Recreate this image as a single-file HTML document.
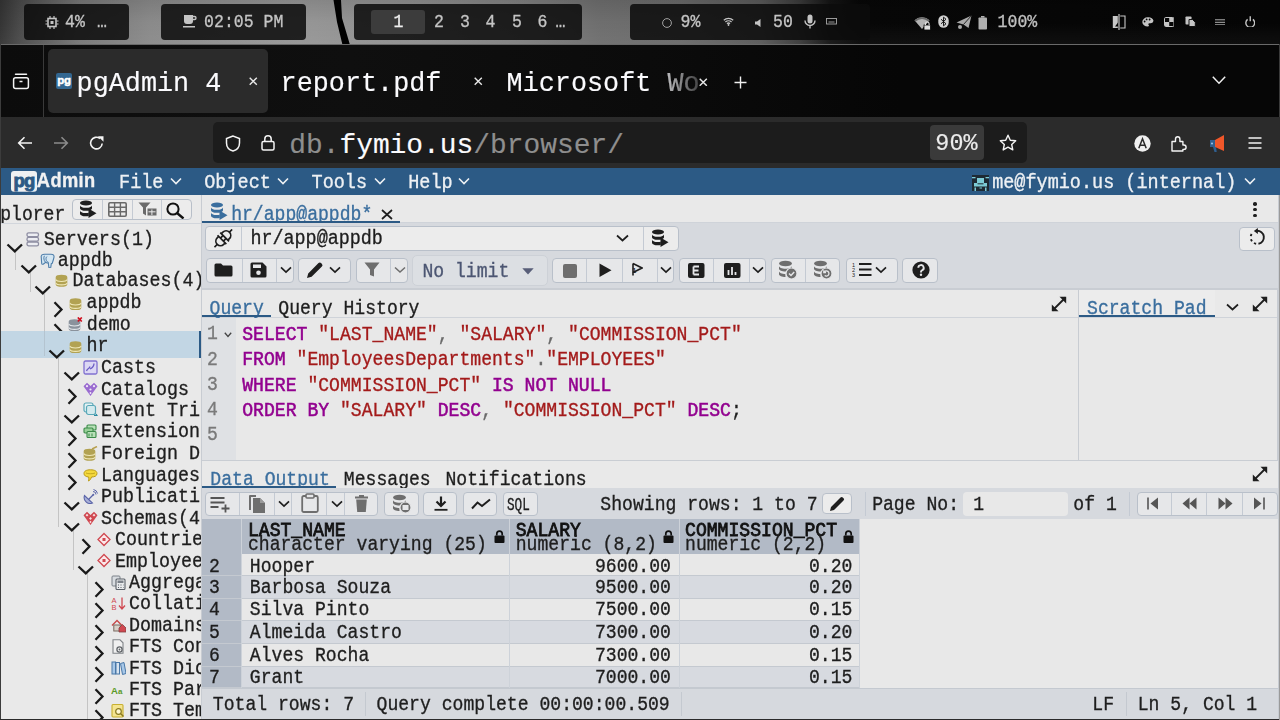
<!DOCTYPE html>
<html><head><meta charset="utf-8">
<style>
*{box-sizing:border-box;margin:0;padding:0}
html,body{width:1280px;height:720px;overflow:hidden;background:#000}
body{position:relative;font-family:"Liberation Mono",monospace;}
.a{position:absolute;display:block}
.t{position:absolute;line-height:0;white-space:pre;transform:scaleY(1.07);transform-origin:0 0;-webkit-text-stroke:0.3px currentColor}
</style></head><body>

<div class="a" style="left:0px;top:0px;width:1280px;height:45px;background:linear-gradient(90deg,#343434 0px,#4a4a4a 20px,#777 80px,#8a8a8a 150px,#969696 300px,#8e8e8e 420px,#808080 520px,#6e6e6e 600px,#6a6a6a 680px,#5a5a5a 760px,#3a3a3a 800px,#141414 830px,#070707 860px,#050505 1280px);"></div>
<div class="a" style="left:0px;top:0px;width:1280px;height:45px;background:linear-gradient(180deg,rgba(0,0,0,0.10),rgba(0,0,0,0) 50%,rgba(255,255,255,0.04));"></div>
<svg class="a" style="left:325px;top:0px;" width="30" height="45" viewBox="0 0 30 45"><path d="M8.5 0 L16 0 L17 18 L25 45 L17.5 45 L12 22 Z" fill="#000"/></svg>
<div class="a" style="left:24px;top:4px;width:105px;height:36px;background:rgba(12,12,12,0.86);border-radius:4px"></div>
<div class="a" style="left:161px;top:4px;width:145px;height:36px;background:rgba(12,12,12,0.86);border-radius:4px"></div>
<div class="a" style="left:354px;top:4px;width:228px;height:36px;background:rgba(12,12,12,0.86);border-radius:4px"></div>
<div class="a" style="left:630px;top:4px;width:240px;height:36px;background:rgba(12,12,12,0.86);border-radius:4px"></div>
<svg class="a" style="left:45px;top:16px;" width="14" height="13" viewBox="0 0 14 13"><rect x="3" y="2.5" width="8" height="8" fill="none" stroke="#c4c4c4" stroke-width="1.6"/><rect x="5.5" y="5" width="3" height="3" fill="#c4c4c4"/><path d="M5 0v2M9 0v2M5 11v2M9 11v2M0.5 5h2M0.5 8h2M11.5 5h2M11.5 8h2" stroke="#c4c4c4" stroke-width="1.2"/></svg>
<div class="t" style="left:65.09px;top:23.30px;font-size:16.5px;color:#c4c4c4;font-weight:normal;font-family:'Liberation Mono';">4%</div>
<div class="t" style="left:97.09px;top:23.30px;font-size:16.5px;color:#c4c4c4;font-weight:normal;font-family:'Liberation Mono';">…</div>
<svg class="a" style="left:183px;top:14px;" width="14" height="14" viewBox="0 0 14 14"><path d="M1 1h9v6a3 3 0 0 1-3 3H4a3 3 0 0 1-3-3z" fill="#c4c4c4"/><path d="M10 2.5h1.5a1.5 1.5 0 0 1 0 3H10" fill="none" stroke="#c4c4c4" stroke-width="1.4"/><rect x="0" y="12" width="12" height="1.5" fill="#c4c4c4"/></svg>
<div class="t" style="left:204.09px;top:23.30px;font-size:16.5px;color:#c4c4c4;font-weight:normal;font-family:'Liberation Mono';">02:05 PM</div>
<div class="a" style="left:371px;top:10px;width:54px;height:24px;background:#3c3c3c;border-radius:3px"></div>
<div class="t" style="left:393.59px;top:23.30px;font-size:16.5px;color:#f0f0f0;font-weight:normal;font-family:'Liberation Mono';">1</div>
<div class="t" style="left:434.09px;top:23.30px;font-size:16.5px;color:#c4c4c4;font-weight:normal;font-family:'Liberation Mono';">2</div>
<div class="t" style="left:460.09px;top:23.30px;font-size:16.5px;color:#c4c4c4;font-weight:normal;font-family:'Liberation Mono';">3</div>
<div class="t" style="left:485.59px;top:23.30px;font-size:16.5px;color:#c4c4c4;font-weight:normal;font-family:'Liberation Mono';">4</div>
<div class="t" style="left:512.09px;top:23.30px;font-size:16.5px;color:#c4c4c4;font-weight:normal;font-family:'Liberation Mono';">5</div>
<div class="t" style="left:537.59px;top:23.30px;font-size:16.5px;color:#c4c4c4;font-weight:normal;font-family:'Liberation Mono';">6</div>
<div class="t" style="left:555.59px;top:23.30px;font-size:16.5px;color:#c4c4c4;font-weight:normal;font-family:'Liberation Mono';">…</div>
<svg class="a" style="left:661px;top:17px;" width="12" height="12" viewBox="0 0 12 12"><circle cx="6" cy="6" r="4.4" fill="none" stroke="#b0b0b0" stroke-width="0.9"/></svg>
<div class="t" style="left:680.59px;top:23.30px;font-size:16.5px;color:#c4c4c4;font-weight:normal;font-family:'Liberation Mono';">9%</div>
<svg class="a" style="left:723px;top:16px;" width="11" height="10" viewBox="0 0 11 10"><path d="M0.8 4.2a7 7 0 0 1 9.4 0M2.4 6a4.5 4.5 0 0 1 6.2 0M4 7.7a2.2 2.2 0 0 1 3 0" fill="none" stroke="#c4c4c4" stroke-width="1.2"/><circle cx="5.5" cy="9" r="0.9" fill="#c4c4c4"/></svg>
<svg class="a" style="left:755px;top:19px;" width="8" height="8" viewBox="0 0 8 8"><path d="M0 2.6h2L5.5 0v8L2 5.4H0z" fill="#c4c4c4"/></svg>
<div class="t" style="left:773.09px;top:23.30px;font-size:16.5px;color:#c4c4c4;font-weight:normal;font-family:'Liberation Mono';">50</div>
<svg class="a" style="left:804px;top:14px;" width="12" height="15" viewBox="0 0 12 15"><rect x="3.5" y="0.5" width="5" height="9" rx="2.5" fill="#c4c4c4"/><path d="M1 6.5a5 5 0 0 0 10 0M6 11.5v3" fill="none" stroke="#c4c4c4" stroke-width="1.4"/></svg>
<svg class="a" style="left:825.5px;top:18px;" width="11" height="6.5" viewBox="0 0 11 6.5"><rect x="0.5" y="0.5" width="10" height="5.5" fill="none" stroke="#a8a8a8" stroke-width="0.9"/><path d="M2.5 4h6" stroke="#a8a8a8" stroke-width="0.9"/></svg>
<svg class="a" style="left:914px;top:16px;" width="17" height="14" viewBox="0 0 17 14"><path d="M0.5 4.2A11 11 0 0 1 15.5 4.2L8 13z" fill="#b4b4b4"/><path d="M0.5 4.2A11 11 0 0 1 15.5 4.2L14.3 5.6A9 9 0 0 0 1.7 5.6z" fill="#6a6a6a"/><rect x="10" y="9" width="6.5" height="5" fill="#e0e0e0" stroke="#060606" stroke-width="0.8"/><path d="M11.5 9V7.8a1.8 1.8 0 0 1 3.6 0V9" fill="none" stroke="#e0e0e0" stroke-width="1.1"/></svg>
<svg class="a" style="left:937.5px;top:14.5px;" width="11" height="13" viewBox="0 0 11 13"><rect x="0.3" y="0.3" width="10.4" height="12.4" rx="5.2" fill="#d0d0d0"/><path d="M3 4.2l5 4.6-2.5 2V2.2l2.5 2-5 4.6" fill="none" stroke="#060606" stroke-width="0.9"/></svg>
<svg class="a" style="left:955.5px;top:14.5px;" width="16" height="15" viewBox="0 0 16 15"><path d="M0.5 7.5L15.5 0.5L12.5 13L7.5 9.5z" fill="#a8a8a8"/><path d="M7.5 9.5L15.5 0.5" stroke="#060606" stroke-width="0.8"/><circle cx="4" cy="12" r="2" fill="#a8a8a8"/></svg>
<svg class="a" style="left:978px;top:15.5px;" width="9.5" height="14" viewBox="0 0 9.5 14"><rect x="3" y="0" width="3.5" height="1.6" fill="#b0b0b0"/><rect x="0.5" y="1.5" width="8.5" height="12" rx="0.8" fill="#b0b0b0"/></svg>
<div class="t" style="left:997.59px;top:23.30px;font-size:16.5px;color:#c0c0c0;font-weight:normal;font-family:'Liberation Mono';">100%</div>
<svg class="a" style="left:1112px;top:13.5px;" width="14" height="16" viewBox="0 0 14 16"><path d="M0.8 2h5v12h-5z" fill="#c8c8c8"/><path d="M8.2 2h4.8v12H8.2" fill="none" stroke="#c8c8c8" stroke-width="1.1"/><path d="M7 0v16" stroke="#c8c8c8" stroke-width="1.2"/><path d="M3 12.5l3-4v4z" fill="#060606"/></svg>
<svg class="a" style="left:1142px;top:17px;" width="11.5" height="9.5" viewBox="0 0 11.5 9.5"><path d="M5.8 0.3a5.5 4.6 0 0 0 0 9.2c1.4 0 1.4-1.1.7-1.7-.5-.7 0-1.6.9-1.6h1.5a2.6 2.6 0 0 0 2.6-2.4A5.5 4.4 0 0 0 5.8.3z" fill="#c4c4c4"/><circle cx="2.6" cy="4.5" r="0.9" fill="#060606"/><circle cx="4.6" cy="2.4" r="0.9" fill="#060606"/><circle cx="7.6" cy="2.5" r="0.9" fill="#060606"/></svg>
<svg class="a" style="left:1163.5px;top:16.5px;" width="10.5" height="10" viewBox="0 0 10.5 10"><rect x="0.5" y="0.5" width="9.5" height="9" rx="1.2" fill="none" stroke="#c4c4c4" stroke-width="1"/><rect x="5.2" y="1" width="4.3" height="4" fill="#c4c4c4"/><rect x="1" y="5" width="4.2" height="4" fill="#c4c4c4"/></svg>
<svg class="a" style="left:1184.5px;top:15.5px;" width="11" height="11" viewBox="0 0 11 11"><rect x="0.5" y="0.5" width="6" height="8" rx="0.8" fill="#c4c4c4"/><path d="M4 3.5h3.5l2.8 2.8v4.2H4z" fill="#c4c4c4" stroke="#060606" stroke-width="0.9"/></svg>
<svg class="a" style="left:1214.5px;top:18.5px;" width="10.5" height="6.5" viewBox="0 0 10.5 6.5"><path d="M0 0.8h10.5M0 3.3h10.5M0 5.8h10.5" stroke="#b0b0b0" stroke-width="1"/></svg>
<svg class="a" style="left:1244.5px;top:15.5px;" width="10.5" height="11.5" viewBox="0 0 10.5 11.5"><path d="M2.6 3.4a4.4 4.4 0 1 0 5.3 0" fill="none" stroke="#c4c4c4" stroke-width="1.4"/><path d="M5.25 0.3v5" stroke="#c4c4c4" stroke-width="1.4"/></svg>
<div class="a" style="left:0px;top:44px;width:1280px;height:1px;background:#6a6a6a;"></div>
<div class="a" style="left:0px;top:45px;width:1280px;height:72px;background:linear-gradient(90deg,#0c0c0c 0px,#0f0f0f 350px,#0b0b0b 650px,#060606 900px,#060606 1280px);"></div>
<div class="a" style="left:1279px;top:44px;width:1px;height:124px;background:#3a3a3a;"></div>
<div class="a" style="left:0px;top:44px;width:1px;height:676px;background:#3c3c3c;"></div>
<div class="a" style="left:43px;top:45px;width:1px;height:72px;background:#3a3a3a;"></div>
<svg class="a" style="left:12px;top:72px;" width="18" height="18" viewBox="0 0 18 18"><path d="M3.5 2.2h11" stroke="#f4f4f4" stroke-width="1.5" stroke-linecap="round"/><rect x="1.6" y="5.8" width="14.8" height="10.6" rx="2" fill="none" stroke="#f4f4f4" stroke-width="1.5"/><path d="M7.5 9.5h3" stroke="#f4f4f4" stroke-width="1.5"/></svg>
<div class="a" style="left:48px;top:49px;width:220px;height:64px;background:#2b2b2b;border-radius:5px"></div>
<svg class="a" style="left:56px;top:73px;" width="16" height="16" viewBox="0 0 16 16"><rect width="16" height="16" rx="2" fill="#336791"/><text x="8" y="11.2" font-family="Liberation Sans" font-weight="bold" font-size="11.5" fill="#fff" stroke="#fff" stroke-width="0.5" text-anchor="middle" letter-spacing="-0.3">pg</text></svg>
<div class="t" style="left:76.62px;top:83.81px;font-size:26.8px;color:#fbfbfe;font-weight:normal;font-family:'Liberation Mono';transform:scaleY(1.05);-webkit-text-stroke:0.15px currentColor;">pgAdmin 4</div>
<svg class="a" style="left:249px;top:77px;" width="8.5" height="8.5" viewBox="0 0 8.5 8.5"><path d="M0.7 0.7L7.8 7.8M7.8 0.7L0.7 7.8" stroke="#e8e8e8" stroke-width="1.4"/></svg>
<div class="t" style="left:280.62px;top:83.81px;font-size:26.8px;color:#fbfbfe;font-weight:normal;font-family:'Liberation Mono';transform:scaleY(1.05);-webkit-text-stroke:0.15px currentColor;">report.pdf</div>
<svg class="a" style="left:474px;top:77px;" width="8.5" height="8.5" viewBox="0 0 8.5 8.5"><path d="M0.7 0.7L7.8 7.8M7.8 0.7L0.7 7.8" stroke="#e8e8e8" stroke-width="1.4"/></svg>
<div class="a" style="left:500px;top:55px;width:198px;height:50px;overflow:hidden;-webkit-mask-image:linear-gradient(90deg,#000 0,#000 150px,rgba(0,0,0,0.25) 198px)">
<div class="t" style="left:6.62px;top:28.81px;font-size:26.8px;color:#fbfbfe;font-weight:normal;font-family:'Liberation Mono';transform:scaleY(1.05);-webkit-text-stroke:0.15px currentColor;">Microsoft Wo</div>
</div>
<svg class="a" style="left:699px;top:77.5px;" width="8.5" height="8.5" viewBox="0 0 8.5 8.5"><path d="M0.7 0.7L7.8 7.8M7.8 0.7L0.7 7.8" stroke="#e8e8e8" stroke-width="1.4"/></svg>
<svg class="a" style="left:734px;top:76px;" width="13" height="13" viewBox="0 0 13 13"><path d="M6.5 0.5v12M0.5 6.5h12" stroke="#f0f0f0" stroke-width="1.4"/></svg>
<svg class="a" style="left:1212px;top:76px;" width="14" height="9" viewBox="0 0 14 9"><path d="M0.8 0.8L7 7.2L13.2 0.8" fill="none" stroke="#f0f0f0" stroke-width="1.5"/></svg>
<div class="a" style="left:1px;top:117px;width:1279px;height:51px;background:#2b2b2b;"></div>
<svg class="a" style="left:17px;top:136px;" width="16" height="14" viewBox="0 0 16 14"><path d="M15 7H2M7.5 1.2L1.7 7l5.8 5.8" fill="none" stroke="#f4f4f4" stroke-width="1.6"/></svg>
<svg class="a" style="left:53px;top:136px;" width="16" height="14" viewBox="0 0 16 14"><path d="M1 7h13M8.5 1.2L14.3 7l-5.8 5.8" fill="none" stroke="#8c8c8c" stroke-width="1.6"/></svg>
<svg class="a" style="left:89px;top:135px;" width="16" height="16" viewBox="0 0 16 16"><path d="M13.2 8.5A5.8 5.8 0 1 1 11 3.5" fill="none" stroke="#f4f4f4" stroke-width="1.6"/><path d="M9 1.2h5.5v5.5z" fill="#f4f4f4"/></svg>
<div class="a" style="left:213px;top:122px;width:814px;height:41px;background:#1c1c1c;border-radius:5px"></div>
<svg class="a" style="left:225px;top:135px;" width="16" height="17" viewBox="0 0 16 17"><path d="M8 1L1.5 3.5v4.5c0 4 3 7 6.5 8 3.5-1 6.5-4 6.5-8V3.5z" fill="none" stroke="#f4f4f4" stroke-width="1.5"/></svg>
<svg class="a" style="left:261px;top:134px;" width="14" height="17" viewBox="0 0 14 17"><rect x="1" y="7.5" width="12" height="8.5" rx="1.5" fill="none" stroke="#f4f4f4" stroke-width="1.5"/><path d="M3.8 7.5V5a3.2 3.2 0 0 1 6.4 0v2.5" fill="none" stroke="#f4f4f4" stroke-width="1.5"/></svg>
<div class="t" style="left:289.2px;top:145.6px;font-size:27.9px;color:#8e8e8e;transform:none;-webkit-text-stroke:0.15px currentColor">db.<span style="color:#fbfbfe">fymio.us</span>/browser/</div>
<div class="a" style="left:930px;top:125px;width:54px;height:35px;background:#3a3a3a;border-radius:4px"></div>
<div class="t" style="left:935.36px;top:144.46px;font-size:23.4px;color:#ececec;font-weight:normal;font-family:'Liberation Mono';transform:scaleY(1.05);-webkit-text-stroke:0.15px currentColor;">90%</div>
<svg class="a" style="left:999px;top:134px;" width="18" height="18" viewBox="0 0 18 18"><path d="M9 1.2l2.3 5 5.4.6-4 3.7 1.1 5.4L9 13.2l-4.8 2.7 1.1-5.4-4-3.7 5.4-.6z" fill="none" stroke="#f4f4f4" stroke-width="1.4" stroke-linejoin="round"/></svg>
<svg class="a" style="left:1134px;top:135px;" width="17" height="17" viewBox="0 0 17 17"><circle cx="8.5" cy="8.5" r="8.2" fill="#f0f0f0"/><path d="M4.8 13.3L8.5 3.8l3.7 9.5M6 10.2h5" fill="none" stroke="#2b2b2b" stroke-width="1.5"/></svg>
<svg class="a" style="left:1171px;top:135px;" width="16" height="17" viewBox="0 0 16 17"><path d="M1 16V6.5h3.5V4a2.2 2.2 0 0 1 4.4 0v2.5h3V10h1a2.2 2.2 0 0 1 0 4.4h-1V16z" fill="none" stroke="#f4f4f4" stroke-width="1.4" stroke-linejoin="round"/></svg>
<svg class="a" style="left:1208px;top:134px;" width="17" height="19" viewBox="0 0 17 19"><path d="M16 1v16L7 13H4V6h3z" fill="#f0572a"/><path d="M2 6h5v7H2z" fill="#2f5f8f"/><path d="M5 13l1.5 5h2.2L8 13z" fill="#2f5f8f"/><circle cx="4" cy="9.5" r="1" fill="#9ec4e8"/></svg>
<svg class="a" style="left:1248px;top:137px;" width="14" height="12" viewBox="0 0 14 12"><path d="M0.5 1h13M0.5 6h13M0.5 11h13" stroke="#f4f4f4" stroke-width="1.5"/></svg>
<div class="a" style="left:1px;top:168px;width:1279px;height:27px;background:#2c5a85;"></div>
<svg class="a" style="left:11px;top:171px;" width="26" height="21" viewBox="0 0 26 21"><rect x="0" y="0" width="26" height="20.8" rx="3" fill="#eef0f2"/><text x="2.6" y="16.3" font-family="Liberation Sans" font-weight="bold" font-size="18.5" fill="#2c5a85" stroke="#2c5a85" stroke-width="0.9" letter-spacing="-0.8">pg</text></svg>
<div class="t" style="left:36.84px;top:180.62px;font-size:18.3px;color:#f2f2f2;font-weight:bold;font-family:'Liberation Sans';letter-spacing:0.35px;">Admin</div>
<div class="t" style="left:119.04px;top:183.53px;font-size:18.5px;color:#eef1f4;font-weight:normal;font-family:'Liberation Mono';">File</div>
<svg class="a" style="left:169.8px;top:177px;" width="12" height="8" viewBox="0 0 12 8"><path d="M1 1.5L6.0 6.5L11 1.5" fill="none" stroke="#eef1f4" stroke-width="1.6"/></svg>
<div class="t" style="left:204.24px;top:183.53px;font-size:18.5px;color:#eef1f4;font-weight:normal;font-family:'Liberation Mono';">Object</div>
<svg class="a" style="left:277px;top:177px;" width="12" height="8" viewBox="0 0 12 8"><path d="M1 1.5L6.0 6.5L11 1.5" fill="none" stroke="#eef1f4" stroke-width="1.6"/></svg>
<div class="t" style="left:311.54px;top:183.53px;font-size:18.5px;color:#eef1f4;font-weight:normal;font-family:'Liberation Mono';">Tools</div>
<svg class="a" style="left:373.5px;top:177px;" width="12" height="8" viewBox="0 0 12 8"><path d="M1 1.5L6.0 6.5L11 1.5" fill="none" stroke="#eef1f4" stroke-width="1.6"/></svg>
<div class="t" style="left:408.24px;top:183.53px;font-size:18.5px;color:#eef1f4;font-weight:normal;font-family:'Liberation Mono';">Help</div>
<svg class="a" style="left:458.2px;top:177px;" width="12" height="8" viewBox="0 0 12 8"><path d="M1 1.5L6.0 6.5L11 1.5" fill="none" stroke="#eef1f4" stroke-width="1.6"/></svg>
<svg class="a" style="left:972px;top:175px;" width="17" height="16" viewBox="0 0 17 16"><rect width="17" height="16" fill="#1e2a34"/><g fill="#7ccbd6"><rect x="0" y="2" width="3.5" height="1.3"/><rect x="13.5" y="2" width="3.5" height="1.3"/><rect x="5" y="3" width="7" height="5.5"/><rect x="2" y="8" width="13" height="3.5"/><rect x="2.5" y="12.5" width="1.5" height="3.5"/><rect x="13" y="12.5" width="1.5" height="3.5"/><rect x="7.5" y="12.5" width="2.5" height="1"/></g><rect x="5.5" y="8.3" width="6" height="1" fill="#1e2a34"/></svg>
<div class="t" style="left:992.14px;top:183.53px;font-size:18.5px;color:#eef1f4;font-weight:normal;font-family:'Liberation Mono';">me@fymio.us (internal)</div>
<svg class="a" style="left:1244px;top:177px;" width="12" height="8" viewBox="0 0 12 8"><path d="M1 1.5L6.0 6.5L11 1.5" fill="none" stroke="#eef1f4" stroke-width="1.6"/></svg>
<div class="a" style="left:1px;top:195px;width:200px;height:525px;background:#e9e9e9;"></div>
<div class="a" style="left:201px;top:195px;width:1px;height:525px;background:#c8ccd2;"></div>
<div class="a" style="left:1px;top:223px;width:200px;height:1px;background:#d2d6dc;"></div>
<div class="a" style="left:1px;top:195px;width:200px;height:28px;overflow:hidden">
<div class="t" style="left:-98.55px;top:19.65px;font-size:18.1px;color:#1e1e1e;font-weight:normal;font-family:'Liberation Mono';">Object Explorer</div>
</div>
<div class="a" style="left:72px;top:199px;width:120px;height:21px;background:#ececec;border:1px solid #b8bfc9;border-radius:4px"></div>
<div class="a" style="left:102px;top:200px;width:1px;height:19px;background:#c4cad3;"></div>
<div class="a" style="left:132px;top:200px;width:1px;height:19px;background:#c4cad3;"></div>
<div class="a" style="left:161px;top:200px;width:1px;height:19px;background:#c4cad3;"></div>
<svg class="a" style="left:79px;top:200px;" width="18" height="18" viewBox="0 0 18 18"><ellipse cx="7" cy="3" rx="6" ry="2.6" fill="#1e1e1e"/><path d="M1 5.2c0 1.5 2.7 2.6 6 2.6s6-1.1 6-2.6v3c0 1.5-2.7 2.6-6 2.6s-6-1.1-6-2.6z" fill="#1e1e1e"/><path d="M1 10.4c0 1.5 2.7 2.6 6 2.6 1 0 2-.1 2.8-.3V16c-.8.2-1.8.3-2.8.3-3.3 0-6-1.1-6-2.6z" fill="#1e1e1e"/><path d="M9.5 8.5L17.5 13.3 9.5 18z" fill="#1e1e1e"/></svg>
<svg class="a" style="left:108px;top:202px;" width="19" height="15" viewBox="0 0 19 15"><rect x="0.8" y="0.8" width="17.4" height="13.4" rx="1.2" fill="none" stroke="#6a6a6a" stroke-width="1.6"/><path d="M0.8 5.3h17.4M0.8 9.7h17.4M6.6 0.8v13.4M12.4 0.8v13.4" stroke="#6a6a6a" stroke-width="1.4"/></svg>
<svg class="a" style="left:138px;top:202px;" width="19" height="14" viewBox="0 0 19 14"><path d="M0.5 0.5h12l-4.5 5v8l-3-2v-6z" fill="#6a6a6a"/><rect x="9.5" y="6.5" width="9" height="7" fill="#6a6a6a"/><path d="M10.5 9.8h7M13.9 7.5v5.5" stroke="#ececec" stroke-width="1"/></svg>
<svg class="a" style="left:166px;top:202px;" width="20" height="17" viewBox="0 0 20 17"><circle cx="7" cy="7" r="5.6" fill="none" stroke="#111" stroke-width="2"/><path d="M11 11l6.5 5.5" stroke="#111" stroke-width="2.4"/></svg>
<div class="a" style="left:1px;top:223px;width:200px;height:497px;overflow:hidden">
<div class="a" style="left:14px;top:28px;width:1px;height:19px;background:#c4c4c4;"></div>
<div class="a" style="left:29px;top:49px;width:1px;height:20px;background:#c4c4c4;"></div>
<div class="a" style="left:43px;top:71px;width:1px;height:62px;background:#c4c4c4;"></div>
<div class="a" style="left:57px;top:135px;width:1px;height:169px;background:#c4c4c4;"></div>
<div class="a" style="left:72px;top:304px;width:1px;height:43px;background:#c4c4c4;"></div>
<div class="a" style="left:86px;top:347px;width:1px;height:150px;background:#c4c4c4;"></div>
<div class="t" style="left:42.84px;top:18.08px;font-size:18.35px;color:#1e1e1e;font-weight:normal;font-family:'Liberation Mono';">Servers(1)</div>
<div class="t" style="left:56.74px;top:38.88px;font-size:18.35px;color:#1e1e1e;font-weight:normal;font-family:'Liberation Mono';">appdb</div>
<div class="t" style="left:71.54px;top:59.38px;font-size:18.35px;color:#1e1e1e;font-weight:normal;font-family:'Liberation Mono';">Databases(4)</div>
<div class="t" style="left:85.54px;top:81.48px;font-size:18.35px;color:#1e1e1e;font-weight:normal;font-family:'Liberation Mono';">appdb</div>
<div class="t" style="left:85.84px;top:102.88px;font-size:18.35px;color:#1e1e1e;font-weight:normal;font-family:'Liberation Mono';">demo</div>
<div class="t" style="left:85.54px;top:124.18px;font-size:18.35px;color:#1e1e1e;font-weight:normal;font-family:'Liberation Mono';">hr</div>
<div class="t" style="left:99.94px;top:145.78px;font-size:18.35px;color:#1e1e1e;font-weight:normal;font-family:'Liberation Mono';">Casts</div>
<div class="t" style="left:99.94px;top:167.88px;font-size:18.35px;color:#1e1e1e;font-weight:normal;font-family:'Liberation Mono';">Catalogs</div>
<div class="t" style="left:99.94px;top:188.58px;font-size:18.35px;color:#1e1e1e;font-weight:normal;font-family:'Liberation Mono';">Event Triggers</div>
<div class="t" style="left:99.94px;top:210.28px;font-size:18.35px;color:#1e1e1e;font-weight:normal;font-family:'Liberation Mono';">Extensions</div>
<div class="t" style="left:99.94px;top:231.88px;font-size:18.35px;color:#1e1e1e;font-weight:normal;font-family:'Liberation Mono';">Foreign Data Wrappers</div>
<div class="t" style="left:99.94px;top:254.08px;font-size:18.35px;color:#1e1e1e;font-weight:normal;font-family:'Liberation Mono';">Languages</div>
<div class="t" style="left:99.94px;top:275.48px;font-size:18.35px;color:#1e1e1e;font-weight:normal;font-family:'Liberation Mono';">Publications</div>
<div class="t" style="left:99.94px;top:296.88px;font-size:18.35px;color:#1e1e1e;font-weight:normal;font-family:'Liberation Mono';">Schemas(4)</div>
<div class="t" style="left:114.04px;top:318.28px;font-size:18.35px;color:#1e1e1e;font-weight:normal;font-family:'Liberation Mono';">Countries</div>
<div class="t" style="left:114.04px;top:339.68px;font-size:18.35px;color:#1e1e1e;font-weight:normal;font-family:'Liberation Mono';">Employees</div>
<div class="t" style="left:128.04px;top:361.08px;font-size:18.35px;color:#1e1e1e;font-weight:normal;font-family:'Liberation Mono';">Aggregates</div>
<div class="t" style="left:128.04px;top:382.48px;font-size:18.35px;color:#1e1e1e;font-weight:normal;font-family:'Liberation Mono';">Collations</div>
<div class="t" style="left:128.04px;top:403.88px;font-size:18.35px;color:#1e1e1e;font-weight:normal;font-family:'Liberation Mono';">Domains</div>
<div class="t" style="left:128.04px;top:425.28px;font-size:18.35px;color:#1e1e1e;font-weight:normal;font-family:'Liberation Mono';">FTS Configurations</div>
<div class="t" style="left:128.04px;top:446.68px;font-size:18.35px;color:#1e1e1e;font-weight:normal;font-family:'Liberation Mono';">FTS Dictionaries</div>
<div class="t" style="left:128.04px;top:468.08px;font-size:18.35px;color:#1e1e1e;font-weight:normal;font-family:'Liberation Mono';">FTS Parsers</div>
<div class="t" style="left:128.04px;top:489.48px;font-size:18.35px;color:#1e1e1e;font-weight:normal;font-family:'Liberation Mono';">FTS Templates</div>
<svg class="a" style="left:25px;top:8.800000000000011px;" width="15" height="15" viewBox="0 0 15 15"><g fill="#ecedf2" stroke="#8e8ea2" stroke-width="1.3"><rect x="1" y="0.8" width="11.5" height="3.8" rx="1.6"/><rect x="1" y="5.4" width="11.5" height="3.8" rx="1.6"/><rect x="1" y="10" width="11.5" height="3.8" rx="1.6"/></g></svg>
<svg class="a" style="left:4.6px;top:20.200000000000017px;" width="18" height="11" viewBox="0 0 18 11"><path d="M1.5 1.5L8.8 8.4L16 1.5" fill="none" stroke="#1a1a1a" stroke-width="2.3"/></svg>
<svg class="a" style="left:39px;top:29.600000000000023px;" width="15" height="15" viewBox="0 0 15 15"><path d="M1.2 3.8C1 2 2.4 1.2 4.5 1.2h6.5c2 0 3.3 1 3 3-.3 2-1.2 4.5-1.8 6.2l-.9.2-.5 3.6c-.2.9-1.8.9-2 0L8.3 9.8C7.3 10.2 6.2 9.8 5.7 9.2L3.2 11.2c-.8.3-1.4 0-1.5-.8z" fill="#d4e6f2" stroke="#4e7eaa" stroke-width="1.1"/><path d="M4.4 2.8c-1 1.6-.6 4.8.9 6.2M7.2 3.6c-1 .2-1.4 1.6-1.1 3.1s1.1 2.3 2 2" fill="none" stroke="#4e7eaa" stroke-width="1"/></svg>
<svg class="a" style="left:19px;top:41.0px;" width="18" height="11" viewBox="0 0 18 11"><path d="M1.5 1.5L8.8 8.4L16 1.5" fill="none" stroke="#1a1a1a" stroke-width="2.3"/></svg>
<svg class="a" style="left:54px;top:50.10000000000002px;" width="15" height="15" viewBox="0 0 15 15"><g transform="translate(0,1)"><path d="M0.7 3a5.8 2.3 0 0 1 11.6 0v7.5a5.8 2.3 0 0 1-11.6 0z" fill="#b2a252"/><path d="M0.8 5.6a5.8 2.3 0 0 0 11.4 0M0.8 9a5.8 2.3 0 0 0 11.4 0" fill="none" stroke="#f0e8b8" stroke-width="1.1"/></g></svg>
<svg class="a" style="left:33.3px;top:61.5px;" width="18" height="11" viewBox="0 0 18 11"><path d="M1.5 1.5L8.8 8.4L16 1.5" fill="none" stroke="#1a1a1a" stroke-width="2.3"/></svg>
<svg class="a" style="left:68px;top:72.19999999999999px;" width="15" height="15" viewBox="0 0 15 15"><g transform="translate(0,2.5)"><path d="M0.7 3a5.8 2.3 0 0 1 11.6 0v7.5a5.8 2.3 0 0 1-11.6 0z" fill="#b2a252"/><path d="M0.8 5.6a5.8 2.3 0 0 0 11.4 0M0.8 9a5.8 2.3 0 0 0 11.4 0" fill="none" stroke="#f0e8b8" stroke-width="1.1"/></g></svg>
<svg class="a" style="left:52.1px;top:78.19999999999999px;" width="11" height="17" viewBox="0 0 11 17"><path d="M1.5 1.2L8.5 8.5L1.5 15.8" fill="none" stroke="#1a1a1a" stroke-width="2.3"/></svg>
<svg class="a" style="left:67px;top:93.60000000000002px;" width="15" height="15" viewBox="0 0 15 15"><g transform="translate(0,1.5)"><path d="M0.7 3a5.8 2.3 0 0 1 11.6 0v7.5a5.8 2.3 0 0 1-11.6 0z" fill="#8a929c"/><path d="M0.8 5.6a5.8 2.3 0 0 0 11.4 0M0.8 9a5.8 2.3 0 0 0 11.4 0" fill="none" stroke="#e4e8ec" stroke-width="1.1"/></g><path d="M9.8 0.5l4 4M13.8 0.5l-4 4" stroke="#d01020" stroke-width="1.7"/></svg>
<svg class="a" style="left:52px;top:99.60000000000002px;" width="11" height="17" viewBox="0 0 11 17"><path d="M1.5 1.2L8.5 8.5L1.5 15.8" fill="none" stroke="#1a1a1a" stroke-width="2.3"/></svg>
<div class="a" style="left:0px;top:108px;width:200px;height:27px;background:#c2d6e4;"></div>
<div class="a" style="left:198px;top:108px;width:2px;height:27px;background:#2c5a85;"></div>
<div class="a" style="left:43px;top:108px;width:1px;height:25px;background:#b4c4d0;"></div>
<div class="t" style="left:85.54px;top:124.18px;font-size:18.35px;color:#1e1e1e;font-weight:normal;font-family:'Liberation Mono';">hr</div>
<svg class="a" style="left:68px;top:114.89999999999998px;" width="15" height="15" viewBox="0 0 15 15"><g transform="translate(0,2.5)"><path d="M0.7 3a5.8 2.3 0 0 1 11.6 0v7.5a5.8 2.3 0 0 1-11.6 0z" fill="#b2a252"/><path d="M0.8 5.6a5.8 2.3 0 0 0 11.4 0M0.8 9a5.8 2.3 0 0 0 11.4 0" fill="none" stroke="#f0e8b8" stroke-width="1.1"/></g></svg>
<svg class="a" style="left:47.2px;top:126.29999999999995px;" width="18" height="11" viewBox="0 0 18 11"><path d="M1.5 1.5L8.8 8.4L16 1.5" fill="none" stroke="#1a1a1a" stroke-width="2.3"/></svg>
<svg class="a" style="left:82px;top:136.5px;" width="15" height="15" viewBox="0 0 15 15"><rect x="1" y="1" width="13" height="13" rx="1.5" fill="#dcd8f4" stroke="#8070d0" stroke-width="1.3"/><path d="M3.5 11c1-3 3-2 3.5-4.5M7 9c2-1 4-2 4-5.5" fill="none" stroke="#6a5cc4" stroke-width="1.3"/></svg>
<svg class="a" style="left:62px;top:147.89999999999998px;" width="18" height="11" viewBox="0 0 18 11"><path d="M1.5 1.5L8.8 8.4L16 1.5" fill="none" stroke="#1a1a1a" stroke-width="2.3"/></svg>
<svg class="a" style="left:82px;top:158.60000000000002px;" width="15" height="15" viewBox="0 0 15 15"><path d="M7.5 4L11 0.8 14.5 4.3 7.5 14 0.5 4.3 4 0.8z" fill="#9a6cd0"/><g fill="#f0e8f8"><circle cx="4" cy="4.2" r="1.1"/><circle cx="11" cy="4.2" r="1.1"/><circle cx="7.5" cy="7.5" r="1.1"/><circle cx="7.5" cy="11" r="0.9"/></g></svg>
<svg class="a" style="left:66px;top:164.60000000000002px;" width="11" height="17" viewBox="0 0 11 17"><path d="M1.5 1.2L8.5 8.5L1.5 15.8" fill="none" stroke="#1a1a1a" stroke-width="2.3"/></svg>
<svg class="a" style="left:82px;top:179.3px;" width="15" height="15" viewBox="0 0 15 15"><rect x="1" y="1" width="9" height="9" rx="2" fill="#e4f2f4" stroke="#5aa8b8" stroke-width="1.2"/><rect x="3.5" y="3.5" width="9" height="9" rx="2" fill="#d4eaee" stroke="#5aa8b8" stroke-width="1.2"/><path d="M11 13.5h3l-1-1.5" fill="none" stroke="#2a88a0" stroke-width="1.2"/></svg>
<svg class="a" style="left:62px;top:190.7px;" width="18" height="11" viewBox="0 0 18 11"><path d="M1.5 1.5L8.8 8.4L16 1.5" fill="none" stroke="#1a1a1a" stroke-width="2.3"/></svg>
<svg class="a" style="left:82px;top:201px;" width="15" height="15" viewBox="0 0 15 15"><rect x="4" y="1" width="9" height="5" rx="1" fill="#b8e0b8" stroke="#3a8a48" stroke-width="1.1"/><rect x="1" y="4" width="9" height="5" rx="1" fill="#98d098" stroke="#3a8a48" stroke-width="1.1"/><rect x="4" y="7.5" width="9" height="6" rx="1" fill="#b8e0b8" stroke="#3a8a48" stroke-width="1.1"/><path d="M6 9.5v3M9 9.5v3" stroke="#3a8a48" stroke-width="1"/></svg>
<svg class="a" style="left:66px;top:207px;" width="11" height="17" viewBox="0 0 11 17"><path d="M1.5 1.2L8.5 8.5L1.5 15.8" fill="none" stroke="#1a1a1a" stroke-width="2.3"/></svg>
<svg class="a" style="left:82px;top:222.60000000000002px;" width="15" height="15" viewBox="0 0 15 15"><g transform="translate(0,2)"><path d="M0.7 3a5.8 2.3 0 0 1 11.6 0v7.5a5.8 2.3 0 0 1-11.6 0z" fill="#b2a252"/><path d="M0.8 5.6a5.8 2.3 0 0 0 11.4 0M0.8 9a5.8 2.3 0 0 0 11.4 0" fill="none" stroke="#f0e8b8" stroke-width="1.1"/></g><path d="M9 3l5-2.5" stroke="#b8a050" stroke-width="1.5"/></svg>
<svg class="a" style="left:66px;top:228.60000000000002px;" width="11" height="17" viewBox="0 0 11 17"><path d="M1.5 1.2L8.5 8.5L1.5 15.8" fill="none" stroke="#1a1a1a" stroke-width="2.3"/></svg>
<svg class="a" style="left:82px;top:244.8px;" width="15" height="15" viewBox="0 0 15 15"><path d="M1 5.5C1 3 3.5 1.8 7.5 1.8S14 3 14 5.5 11.5 9 8.5 9c-.5 1.5-1.5 3.5-3 4 .5-1.2.5-2.8.2-4C2.8 8.8 1 7.5 1 5.5z" fill="#f4d83c" stroke="#b89a18" stroke-width="1"/><path d="M3 5c1.5 1 7 1 9 0" fill="none" stroke="#b89a18" stroke-width="0.8"/></svg>
<svg class="a" style="left:66px;top:250.8px;" width="11" height="17" viewBox="0 0 11 17"><path d="M1.5 1.2L8.5 8.5L1.5 15.8" fill="none" stroke="#1a1a1a" stroke-width="2.3"/></svg>
<svg class="a" style="left:82px;top:266.2px;" width="15" height="15" viewBox="0 0 15 15"><path d="M1.5 6.5a6 6 0 0 0 8 7.5z" fill="#a8b0d8" stroke="#5a64a8" stroke-width="1.1"/><path d="M5.5 10.5l4.5-4.5" stroke="#5a64a8" stroke-width="1.2"/><circle cx="10.3" cy="5.7" r="1" fill="#5a64a8"/><path d="M10 2.5a3 3 0 0 1 3 3M10.5 0.5a5 5 0 0 1 4 4" fill="none" stroke="#5a64a8" stroke-width="1"/></svg>
<svg class="a" style="left:62px;top:277.59999999999997px;" width="18" height="11" viewBox="0 0 18 11"><path d="M1.5 1.5L8.8 8.4L16 1.5" fill="none" stroke="#1a1a1a" stroke-width="2.3"/></svg>
<svg class="a" style="left:82px;top:287.6px;" width="15" height="15" viewBox="0 0 15 15"><path d="M7.5 4L11 0.8 14.5 4.3 7.5 14 0.5 4.3 4 0.8z" fill="#d04850"/><g fill="#f8e0e2"><rect x="3" y="3.2" width="2" height="2" transform="rotate(45 4 4.2)"/><rect x="10" y="3.2" width="2" height="2" transform="rotate(45 11 4.2)"/><rect x="6.5" y="6.5" width="2" height="2" transform="rotate(45 7.5 7.5)"/><rect x="6.7" y="10.2" width="1.6" height="1.6" transform="rotate(45 7.5 11)"/></g></svg>
<svg class="a" style="left:62px;top:299.0px;" width="18" height="11" viewBox="0 0 18 11"><path d="M1.5 1.5L8.8 8.4L16 1.5" fill="none" stroke="#1a1a1a" stroke-width="2.3"/></svg>
<svg class="a" style="left:96px;top:309px;" width="15" height="15" viewBox="0 0 15 15"><path d="M7 1.5l6 6-6 6-6-6z" fill="#fbe8ea" stroke="#d04850" stroke-width="1.3"/><rect x="5.5" y="6" width="3" height="3" fill="#d04850"/></svg>
<svg class="a" style="left:79.7px;top:315px;" width="11" height="17" viewBox="0 0 11 17"><path d="M1.5 1.2L8.5 8.5L1.5 15.8" fill="none" stroke="#1a1a1a" stroke-width="2.3"/></svg>
<svg class="a" style="left:96px;top:330.4px;" width="15" height="15" viewBox="0 0 15 15"><path d="M7 1.5l6 6-6 6-6-6z" fill="#fbe8ea" stroke="#d04850" stroke-width="1.3"/><rect x="5.5" y="6" width="3" height="3" fill="#d04850"/></svg>
<svg class="a" style="left:75.8px;top:341.79999999999995px;" width="18" height="11" viewBox="0 0 18 11"><path d="M1.5 1.5L8.8 8.4L16 1.5" fill="none" stroke="#1a1a1a" stroke-width="2.3"/></svg>
<svg class="a" style="left:110px;top:351.79999999999995px;" width="15" height="15" viewBox="0 0 15 15"><rect x="1" y="1" width="8" height="10" rx="1" fill="#d8dce0" stroke="#7a8088" stroke-width="1"/><rect x="5" y="4" width="9" height="10.5" rx="1" fill="#e8eaec" stroke="#5a6068" stroke-width="1.1"/><rect x="6.5" y="5.5" width="6" height="2.5" fill="#7a8088"/><path d="M7 10h1M9.5 10h1M12 10h.5M7 12.5h1M9.5 12.5h1M12 12.5h.5" stroke="#5a6068" stroke-width="1.2"/></svg>
<svg class="a" style="left:93.3px;top:357.79999999999995px;" width="11" height="17" viewBox="0 0 11 17"><path d="M1.5 1.2L8.5 8.5L1.5 15.8" fill="none" stroke="#1a1a1a" stroke-width="2.3"/></svg>
<svg class="a" style="left:110px;top:373.20000000000005px;" width="15" height="15" viewBox="0 0 15 15"><text x="0.5" y="6.5" font-family="Liberation Sans" font-size="7.5" fill="#d04850">A</text><text x="0.5" y="14" font-family="Liberation Sans" font-size="7.5" fill="#d04850">B</text><path d="M11 1.5v11M8 9.5l3 3.5 3-3.5" fill="none" stroke="#d04850" stroke-width="1.3"/></svg>
<svg class="a" style="left:93.3px;top:379.20000000000005px;" width="11" height="17" viewBox="0 0 11 17"><path d="M1.5 1.2L8.5 8.5L1.5 15.8" fill="none" stroke="#1a1a1a" stroke-width="2.3"/></svg>
<svg class="a" style="left:110px;top:394.6px;" width="15" height="15" viewBox="0 0 15 15"><path d="M1 7.5L6 2.5l5 5" fill="none" stroke="#c84848" stroke-width="1.4"/><rect x="2.8" y="7" width="6.5" height="6" fill="#d8d0c8" stroke="#7a6a60" stroke-width="1"/><path d="M8 10L11.5 6.5 15 10v4H8z" fill="#d04850" stroke="#804040" stroke-width="0.8"/></svg>
<svg class="a" style="left:93.3px;top:400.6px;" width="11" height="17" viewBox="0 0 11 17"><path d="M1.5 1.2L8.5 8.5L1.5 15.8" fill="none" stroke="#1a1a1a" stroke-width="2.3"/></svg>
<svg class="a" style="left:110px;top:416px;" width="15" height="15" viewBox="0 0 15 15"><path d="M2 0.8h7l3 3v10.5H2z" fill="#f0f0f0" stroke="#808488" stroke-width="1.1"/><circle cx="8.5" cy="10.5" r="2.6" fill="none" stroke="#606468" stroke-width="1.3"/><circle cx="8.5" cy="10.5" r="0.9" fill="#606468"/></svg>
<svg class="a" style="left:93.3px;top:422px;" width="11" height="17" viewBox="0 0 11 17"><path d="M1.5 1.2L8.5 8.5L1.5 15.8" fill="none" stroke="#1a1a1a" stroke-width="2.3"/></svg>
<svg class="a" style="left:110px;top:437.4px;" width="15" height="15" viewBox="0 0 15 15"><rect x="1" y="2" width="3.5" height="12" fill="#a8c8e8" stroke="#4a78a8" stroke-width="1"/><rect x="5" y="2.5" width="3.5" height="11.5" fill="#d8e4f0" stroke="#4a78a8" stroke-width="1"/><path d="M9.5 3.5l3.5-1 2 11-3.5 1z" fill="#a8c8e8" stroke="#4a78a8" stroke-width="1"/></svg>
<svg class="a" style="left:93.3px;top:443.4px;" width="11" height="17" viewBox="0 0 11 17"><path d="M1.5 1.2L8.5 8.5L1.5 15.8" fill="none" stroke="#1a1a1a" stroke-width="2.3"/></svg>
<svg class="a" style="left:110px;top:458.79999999999995px;" width="15" height="15" viewBox="0 0 15 15"><text x="0" y="12" font-family="Liberation Sans" font-weight="bold" font-size="9.5" fill="#5a9a28">A</text><text x="7" y="12" font-family="Liberation Sans" font-weight="bold" font-size="8" fill="#5a9a28">a</text></svg>
<svg class="a" style="left:93.3px;top:464.79999999999995px;" width="11" height="17" viewBox="0 0 11 17"><path d="M1.5 1.2L8.5 8.5L1.5 15.8" fill="none" stroke="#1a1a1a" stroke-width="2.3"/></svg>
<svg class="a" style="left:110px;top:480.20000000000005px;" width="15" height="15" viewBox="0 0 15 15"><rect x="1" y="1.5" width="11" height="12.5" rx="1" fill="#f4e490" stroke="#c8b030" stroke-width="1.1"/><circle cx="7.5" cy="8.5" r="2.8" fill="#fff8d0" stroke="#8a7a20" stroke-width="1.2"/><path d="M9.5 10.5l3 3" stroke="#8a7a20" stroke-width="1.4"/></svg>
<svg class="a" style="left:93.3px;top:486.20000000000005px;" width="11" height="17" viewBox="0 0 11 17"><path d="M1.5 1.2L8.5 8.5L1.5 15.8" fill="none" stroke="#1a1a1a" stroke-width="2.3"/></svg>
</div>
<div class="a" style="left:202px;top:195px;width:1078px;height:28px;background:#e9e9e9;"></div>
<div class="a" style="left:202px;top:222px;width:1078px;height:1px;background:#cfd3d9;"></div>
<svg class="a" style="left:210px;top:202px;" width="18" height="18" viewBox="0 0 18 18"><ellipse cx="7" cy="3" rx="6" ry="2.6" fill="#3a6e9e"/><path d="M1 5.2c0 1.5 2.7 2.6 6 2.6s6-1.1 6-2.6v3c0 1.5-2.7 2.6-6 2.6s-6-1.1-6-2.6z" fill="#3a6e9e"/><path d="M1 10.4c0 1.5 2.7 2.6 6 2.6 1 0 2-.1 2.8-.3V16c-.8.2-1.8.3-2.8.3-3.3 0-6-1.1-6-2.6z" fill="#3a6e9e"/><path d="M9.5 8.5L17.5 13.3 9.5 18z" fill="#3a6e9e"/></svg>
<div class="t" style="left:231.15px;top:215.25px;font-size:18.1px;color:#3a6e9e;font-weight:normal;font-family:'Liberation Mono';">hr/app@appdb*</div>
<svg class="a" style="left:381px;top:209px;" width="12" height="11" viewBox="0 0 12 11"><path d="M1 1L11 10M11 1L1 10" stroke="#1e1e1e" stroke-width="1.7"/></svg>
<div class="a" style="left:202px;top:221px;width:198px;height:2px;background:#2c5a85;"></div>
<div class="a" style="left:1253.2px;top:202.2px;width:3.6px;height:3.6px;border-radius:50%;background:#1e1e1e"></div>
<div class="a" style="left:1253.2px;top:207.79999999999998px;width:3.6px;height:3.6px;border-radius:50%;background:#1e1e1e"></div>
<div class="a" style="left:1253.2px;top:213.5px;width:3.6px;height:3.6px;border-radius:50%;background:#1e1e1e"></div>
<div class="a" style="left:202px;top:223px;width:1078px;height:67px;background:#d6d9de;"></div>
<div class="a" style="left:202px;top:288px;width:1078px;height:2px;background:#c9cdd3;"></div>
<div class="a" style="left:205px;top:226px;width:474px;height:25px;background:#ececec;border:1px solid #b9c0ca;border-radius:4px"></div>
<div class="a" style="left:241px;top:227px;width:1px;height:23px;background:#c4cad3;"></div>
<div class="a" style="left:643px;top:227px;width:1px;height:23px;background:#c4cad3;"></div>
<svg class="a" style="left:214px;top:228.5px;" width="19" height="19" viewBox="0 0 19 19"><g transform="translate(9.3,9.3) rotate(-45)" fill="none" stroke="#1e1e1e" stroke-width="1.7"><path d="M-1.9 -6.2V6.2M1.9 -6.2V6.2M-1.9 -2.1H1.9M-1.9 2.1H1.9"/><path d="M-1.9 -4.6H-4A4.6 4.6 0 0 0 -4 4.6H-1.9"/><path d="M1.9 -4.6H4A4.6 4.6 0 0 1 4 4.6H1.9"/><path d="M-8.6 0H-12.5M8.6 0H12.5"/></g></svg>
<div class="t" style="left:250.44px;top:239.96px;font-size:18.4px;color:#1e1e1e;font-weight:normal;font-family:'Liberation Mono';">hr/app@appdb</div>
<svg class="a" style="left:615.5px;top:234px;" width="13" height="8" viewBox="0 0 13 8"><path d="M1 1.5L6.5 6.5L12 1.5" fill="none" stroke="#1e1e1e" stroke-width="1.7"/></svg>
<svg class="a" style="left:651px;top:229px;" width="18" height="18" viewBox="0 0 18 18"><ellipse cx="7" cy="3" rx="6" ry="2.6" fill="#1e1e1e"/><path d="M1 5.2c0 1.5 2.7 2.6 6 2.6s6-1.1 6-2.6v3c0 1.5-2.7 2.6-6 2.6s-6-1.1-6-2.6z" fill="#1e1e1e"/><path d="M1 10.4c0 1.5 2.7 2.6 6 2.6 1 0 2-.1 2.8-.3V16c-.8.2-1.8.3-2.8.3-3.3 0-6-1.1-6-2.6z" fill="#1e1e1e"/><path d="M9.5 8.5L17.5 13.3 9.5 18z" fill="#1e1e1e"/></svg>
<div class="a" style="left:1239px;top:227px;width:36px;height:24px;background:#ececec;border:1px solid #b9c0ca;border-radius:4px"></div>
<svg class="a" style="left:1247px;top:227px;" width="20" height="20" viewBox="0 0 20 20"><path d="M9.72 3.73A6.6 6.6 0 0 1 11.45 16.80M3.80 9.15A6.6 6.6 0 0 1 4.58 7.00M5.03 14.27A6.6 6.6 0 0 1 3.99 12.23M9.15 16.80A6.6 6.6 0 0 1 7.00 16.02" fill="none" stroke="#1e1e1e" stroke-width="1.9"/><path d="M6.8 4L10.9 1.1 10.9 7z" fill="#1e1e1e"/></svg>
<div class="a" style="left:205.5px;top:258px;width:88.5px;height:25px;background:#e6e7e9;border:1px solid #b9c0ca;border-radius:4px"></div>
<div class="a" style="left:241.5px;top:259px;width:1.0px;height:23px;background:#c4cad3;"></div>
<div class="a" style="left:276px;top:259px;width:1px;height:23px;background:#c4cad3;"></div>
<div class="a" style="left:297.5px;top:258px;width:53.5px;height:25px;background:#e6e7e9;border:1px solid #b9c0ca;border-radius:4px"></div>
<div class="a" style="left:355.5px;top:258px;width:52.0px;height:25px;background:#e6e7e9;border:1px solid #b9c0ca;border-radius:4px"></div>
<div class="a" style="left:390px;top:259px;width:1px;height:23px;background:#c4cad3;"></div>
<div class="a" style="left:411.5px;top:254.5px;width:136.5px;height:31.0px;background:#dcdfe3;border:1px solid #cdd1d7;border-radius:5px"></div>
<div class="a" style="left:551.5px;top:258px;width:122.5px;height:25px;background:#e6e7e9;border:1px solid #b9c0ca;border-radius:4px"></div>
<div class="a" style="left:586px;top:259px;width:1px;height:23px;background:#c4cad3;"></div>
<div class="a" style="left:621.5px;top:259px;width:1.0px;height:23px;background:#c4cad3;"></div>
<div class="a" style="left:657px;top:259px;width:1px;height:23px;background:#c4cad3;"></div>
<div class="a" style="left:678.5px;top:258px;width:87.0px;height:25px;background:#e6e7e9;border:1px solid #b9c0ca;border-radius:4px"></div>
<div class="a" style="left:713px;top:259px;width:1px;height:23px;background:#c4cad3;"></div>
<div class="a" style="left:748.5px;top:259px;width:1.0px;height:23px;background:#c4cad3;"></div>
<div class="a" style="left:771px;top:258px;width:69px;height:25px;background:#e6e7e9;border:1px solid #b9c0ca;border-radius:4px"></div>
<div class="a" style="left:805px;top:259px;width:1px;height:23px;background:#c4cad3;"></div>
<div class="a" style="left:845.5px;top:258px;width:52.0px;height:25px;background:#e6e7e9;border:1px solid #b9c0ca;border-radius:4px"></div>
<div class="a" style="left:902px;top:258px;width:36px;height:25px;background:#e6e7e9;border:1px solid #b9c0ca;border-radius:4px"></div>
<svg class="a" style="left:214px;top:263px;" width="19" height="14" viewBox="0 0 19 14"><path d="M0.5 2a1.5 1.5 0 0 1 1.5-1.5h5l2 2h8a1.5 1.5 0 0 1 1.5 1.5v8a1.5 1.5 0 0 1-1.5 1.5H2A1.5 1.5 0 0 1 .5 12z" fill="#1e1e1e"/></svg>
<svg class="a" style="left:250px;top:262px;" width="17" height="16" viewBox="0 0 17 16"><path d="M0.5 2A1.5 1.5 0 0 1 2 .5h10.5l4 4V14a1.5 1.5 0 0 1-1.5 1.5H2A1.5 1.5 0 0 1 .5 14z" fill="#1e1e1e"/><rect x="3" y="2.5" width="8" height="3.5" fill="#e6e7e9"/><circle cx="8.5" cy="10.8" r="2.3" fill="#e6e7e9"/></svg>
<svg class="a" style="left:279.5px;top:266px;" width="12" height="7.6" viewBox="0 0 12 7.6"><path d="M1 1.5L6.0 6.1L11 1.5" fill="none" stroke="#1e1e1e" stroke-width="1.7"/></svg>
<svg class="a" style="left:306px;top:261px;" width="18" height="18" viewBox="0 0 18 18"><path d="M1 17l1.2-4.6L12.5 2.1a1.8 1.8 0 0 1 2.6 0l.8.8a1.8 1.8 0 0 1 0 2.6L5.6 15.8z" fill="#1e1e1e"/></svg>
<svg class="a" style="left:328.5px;top:266px;" width="12" height="7.6" viewBox="0 0 12 7.6"><path d="M1 1.5L6.0 6.1L11 1.5" fill="none" stroke="#1e1e1e" stroke-width="1.7"/></svg>
<svg class="a" style="left:364px;top:262px;" width="16" height="15" viewBox="0 0 16 15"><path d="M0.5 0.5h15L10 7.5v7l-4-1.5V7.5z" fill="#6e6e6e"/></svg>
<svg class="a" style="left:393.5px;top:266px;" width="12" height="7.6" viewBox="0 0 12 7.6"><path d="M1 1.5L6.0 6.1L11 1.5" fill="none" stroke="#6e6e6e" stroke-width="1.5"/></svg>
<div class="t" style="left:422.45px;top:271.65px;font-size:18.1px;color:#4c5672;font-weight:normal;font-family:'Liberation Mono';">No limit</div>
<svg class="a" style="left:521.5px;top:267.5px;" width="12" height="7" viewBox="0 0 12 7"><path d="M0.3 0.3h11.4L6 6.5z" fill="#585e78"/></svg>
<div class="a" style="left:562.5px;top:263.5px;width:14.0px;height:14.0px;background:#6e6e6e;border-radius:2px"></div>
<svg class="a" style="left:599px;top:263px;" width="13" height="15" viewBox="0 0 13 15"><path d="M0.5 0.5L12.5 7.2 0.5 14z" fill="#1e1e1e"/></svg>
<svg class="a" style="left:630px;top:262px;" width="13" height="14" viewBox="0 0 13 14"><path d="M3 1.5v12M3 1.5l9 4.5-9 4.5" fill="none" stroke="#1e1e1e" stroke-width="1.6"/><text x="2.5" y="11" font-family="Liberation Sans" font-size="6.5" font-weight="bold" fill="#1e1e1e">1</text></svg>
<svg class="a" style="left:660px;top:266px;" width="12" height="7.6" viewBox="0 0 12 7.6"><path d="M1 1.5L6.0 6.1L11 1.5" fill="none" stroke="#1e1e1e" stroke-width="1.7"/></svg>
<svg class="a" style="left:688px;top:262.5px;" width="17" height="15.5" viewBox="0 0 17 15.5"><rect width="16.5" height="15" rx="2" fill="#1e1e1e"/><path d="M5.5 3.5h5.5M5.5 7.5h5M5.5 11.5h5.5M5.5 3.5v8" stroke="#e6e7e9" stroke-width="1.8"/></svg>
<svg class="a" style="left:723.5px;top:262.5px;" width="17" height="15.5" viewBox="0 0 17 15.5"><rect width="16.5" height="15" rx="2" fill="#1e1e1e"/><path d="M4.5 12V7M8 12V4M11.5 12v-3" stroke="#e6e7e9" stroke-width="1.8"/></svg>
<svg class="a" style="left:752px;top:266px;" width="12" height="7.6" viewBox="0 0 12 7.6"><path d="M1 1.5L6.0 6.1L11 1.5" fill="none" stroke="#1e1e1e" stroke-width="1.7"/></svg>
<svg class="a" style="left:777.5px;top:260px;" width="20" height="20" viewBox="0 0 20 20"><ellipse cx="7.5" cy="3.5" rx="6.5" ry="2.8" fill="#6e6e6e"/><path d="M1 6c0 1.5 2.9 2.8 6.5 2.8S14 7.5 14 6v2.8c0 1.5-2.9 2.8-6.5 2.8S1 10.3 1 8.8z" fill="#6e6e6e"/><path d="M1 11.3c0 1.5 2.9 2.8 6.5 2.8v3c-3.6 0-6.5-1.3-6.5-2.8z" fill="#6e6e6e"/><circle cx="13.5" cy="13.5" r="5.5" fill="#6e6e6e" stroke="#e6e7e9" stroke-width="1.2"/><path d="M11 13.5l2 2 3.2-3.6" fill="none" stroke="#e6e7e9" stroke-width="1.5"/></svg>
<svg class="a" style="left:812.5px;top:260px;" width="20" height="20" viewBox="0 0 20 20"><ellipse cx="7.5" cy="3.5" rx="6.5" ry="2.8" fill="#6e6e6e"/><path d="M1 6c0 1.5 2.9 2.8 6.5 2.8S14 7.5 14 6v2.8c0 1.5-2.9 2.8-6.5 2.8S1 10.3 1 8.8z" fill="#6e6e6e"/><path d="M1 11.3c0 1.5 2.9 2.8 6.5 2.8v3c-3.6 0-6.5-1.3-6.5-2.8z" fill="#6e6e6e"/><circle cx="13.5" cy="13.5" r="5.5" fill="#6e6e6e" stroke="#e6e7e9" stroke-width="1.2"/><path d="M11.2 12a2.6 2.6 0 1 1 0.5 3.5M10.8 10.3v2.2h2.2" fill="none" stroke="#e6e7e9" stroke-width="1.3"/></svg>
<svg class="a" style="left:852px;top:262px;" width="20" height="15" viewBox="0 0 20 15"><path d="M7 2h12.5M7 7.5h12.5M7 13h12.5" stroke="#1e1e1e" stroke-width="2"/><text x="0" y="5" font-family="Liberation Sans" font-size="5.5" fill="#1e1e1e">1</text><text x="0" y="10" font-family="Liberation Sans" font-size="5.5" fill="#1e1e1e">2</text><text x="0" y="15" font-family="Liberation Sans" font-size="5.5" fill="#1e1e1e">3</text></svg>
<svg class="a" style="left:875px;top:266px;" width="12" height="7.6" viewBox="0 0 12 7.6"><path d="M1 1.5L6.0 6.1L11 1.5" fill="none" stroke="#1e1e1e" stroke-width="1.7"/></svg>
<svg class="a" style="left:911.5px;top:261px;" width="18" height="18" viewBox="0 0 18 18"><circle cx="9" cy="9" r="8.6" fill="#1e1e1e"/><path d="M6.3 6.8a2.7 2.7 0 1 1 3.7 2.5c-.7.3-1 .8-1 1.5v.8" fill="none" stroke="#e6e7e9" stroke-width="1.9"/><circle cx="9" cy="13.8" r="1.2" fill="#e6e7e9"/></svg>
<div class="a" style="left:202px;top:290px;width:1078px;height:27px;background:#e9e9e9;"></div>
<div class="a" style="left:202px;top:317px;width:1078px;height:1px;background:#cfd3d9;"></div>
<div class="t" style="left:209.55px;top:308.65px;font-size:18.1px;color:#3a6e9e;font-weight:normal;font-family:'Liberation Mono';">Query</div>
<div class="a" style="left:202px;top:315px;width:69px;height:2px;background:#2c5a85;"></div>
<div class="t" style="left:278.30px;top:308.65px;font-size:18.1px;color:#1e1e1e;font-weight:normal;font-family:'Liberation Mono';">Query History</div>
<svg class="a" style="left:1050.5px;top:296px;" width="16" height="16" viewBox="0 0 16 16"><path d="M1.5 14.5L14.5 1.5" stroke="#1e1e1e" stroke-width="1.8"/><path d="M8.5 0.8h6.7v6.7z" fill="#1e1e1e"/><path d="M0.8 8.5v6.7h6.7z" fill="#1e1e1e"/></svg>
<div class="a" style="left:1078px;top:290px;width:1px;height:170px;background:#c8ccd2;"></div>
<div class="a" style="left:1079px;top:290px;width:136px;height:27px;background:#ececec;"></div>
<div class="t" style="left:1087.05px;top:309.05px;font-size:18.1px;color:#3a6e9e;font-weight:normal;font-family:'Liberation Mono';">Scratch Pad</div>
<div class="a" style="left:1079px;top:315px;width:136px;height:2px;background:#2c5a85;"></div>
<svg class="a" style="left:1225.5px;top:302.5px;" width="13" height="8" viewBox="0 0 13 8"><path d="M1 1.5L6.5 6.5L12 1.5" fill="none" stroke="#1e1e1e" stroke-width="1.7"/></svg>
<svg class="a" style="left:1252px;top:296px;" width="16" height="16" viewBox="0 0 16 16"><path d="M1.5 14.5L14.5 1.5" stroke="#1e1e1e" stroke-width="1.8"/><path d="M8.5 0.8h6.7v6.7z" fill="#1e1e1e"/><path d="M0.8 8.5v6.7h6.7z" fill="#1e1e1e"/></svg>
<div class="a" style="left:1277px;top:290px;width:1px;height:170px;background:#c8ccd2;"></div>
<div class="a" style="left:202px;top:318px;width:876px;height:142px;background:#e8e8e8;"></div>
<div class="a" style="left:1079px;top:318px;width:198px;height:142px;background:#e8e8e8;"></div>
<div class="a" style="left:202px;top:318px;width:34px;height:142px;background:#dfe1e4;"></div>
<div class="t" style="left:207.05px;top:334.15px;font-size:18.1px;color:#7a7a7a;font-weight:normal;font-family:'Liberation Mono';">1</div>
<div class="t" style="left:207.05px;top:359.65px;font-size:18.1px;color:#7a7a7a;font-weight:normal;font-family:'Liberation Mono';">2</div>
<div class="t" style="left:207.05px;top:385.15px;font-size:18.1px;color:#7a7a7a;font-weight:normal;font-family:'Liberation Mono';">3</div>
<div class="t" style="left:207.05px;top:410.15px;font-size:18.1px;color:#7a7a7a;font-weight:normal;font-family:'Liberation Mono';">4</div>
<div class="t" style="left:207.05px;top:435.15px;font-size:18.1px;color:#7a7a7a;font-weight:normal;font-family:'Liberation Mono';">5</div>
<svg class="a" style="left:224px;top:332px;" width="8" height="6" viewBox="0 0 8 6"><path d="M0.8 0.8L4 4.5 7.2 0.8" fill="none" stroke="#444" stroke-width="1.3"/></svg>
<div class="t" style="left:242.25px;top:334.75px;font-size:18.1px"><span style="color:#92008f;-webkit-text-stroke:0.5px #92008f;">SELECT</span><span style="color:#1e1e1e;"> </span><span style="color:#a31a1a;">&quot;LAST_NAME&quot;</span><span style="color:#6a6a6a;">, </span><span style="color:#a31a1a;">&quot;SALARY&quot;</span><span style="color:#6a6a6a;">, </span><span style="color:#a31a1a;">&quot;COMMISSION_PCT&quot;</span></div>
<div class="t" style="left:242.25px;top:360.25px;font-size:18.1px"><span style="color:#92008f;-webkit-text-stroke:0.5px #92008f;">FROM</span><span style="color:#1e1e1e;"> </span><span style="color:#a31a1a;">&quot;EmployeesDepartments&quot;</span><span style="color:#6a6a6a;">.</span><span style="color:#a31a1a;">&quot;EMPLOYEES&quot;</span></div>
<div class="t" style="left:242.25px;top:385.75px;font-size:18.1px"><span style="color:#92008f;-webkit-text-stroke:0.5px #92008f;">WHERE</span><span style="color:#1e1e1e;"> </span><span style="color:#a31a1a;">&quot;COMMISSION_PCT&quot;</span><span style="color:#1e1e1e;"> </span><span style="color:#92008f;-webkit-text-stroke:0.5px #92008f;">IS</span><span style="color:#1e1e1e;"> </span><span style="color:#92008f;-webkit-text-stroke:0.5px #92008f;">NOT</span><span style="color:#1e1e1e;"> </span><span style="color:#92008f;-webkit-text-stroke:0.5px #92008f;">NULL</span></div>
<div class="t" style="left:242.25px;top:410.75px;font-size:18.1px"><span style="color:#92008f;-webkit-text-stroke:0.5px #92008f;">ORDER</span><span style="color:#1e1e1e;"> </span><span style="color:#92008f;-webkit-text-stroke:0.5px #92008f;">BY</span><span style="color:#1e1e1e;"> </span><span style="color:#a31a1a;">&quot;SALARY&quot;</span><span style="color:#1e1e1e;"> </span><span style="color:#92008f;-webkit-text-stroke:0.5px #92008f;">DESC</span><span style="color:#6a6a6a;">, </span><span style="color:#a31a1a;">&quot;COMMISSION_PCT&quot;</span><span style="color:#1e1e1e;"> </span><span style="color:#92008f;-webkit-text-stroke:0.5px #92008f;">DESC</span><span style="color:#1e1e1e;">;</span></div>
<div class="a" style="left:202px;top:460px;width:1078px;height:1px;background:#c9cdd3;"></div>
<div class="a" style="left:202px;top:461px;width:1078px;height:27px;background:#e9e9e9;"></div>
<div class="t" style="left:210.35px;top:479.85px;font-size:18.1px;color:#3a6e9e;font-weight:normal;font-family:'Liberation Mono';">Data Output</div>
<div class="a" style="left:202px;top:486px;width:134px;height:2px;background:#2c5a85;"></div>
<div class="t" style="left:343.85px;top:479.85px;font-size:18.1px;color:#1e1e1e;font-weight:normal;font-family:'Liberation Mono';">Messages</div>
<div class="t" style="left:445.45px;top:479.85px;font-size:18.1px;color:#1e1e1e;font-weight:normal;font-family:'Liberation Mono';">Notifications</div>
<svg class="a" style="left:1251.5px;top:466px;" width="16" height="16" viewBox="0 0 16 16"><path d="M1.5 14.5L14.5 1.5" stroke="#1e1e1e" stroke-width="1.8"/><path d="M8.5 0.8h6.7v6.7z" fill="#1e1e1e"/><path d="M0.8 8.5v6.7h6.7z" fill="#1e1e1e"/></svg>
<div class="a" style="left:202px;top:488px;width:1078px;height:31px;background:#d6d9de;"></div>
<div class="a" style="left:204.5px;top:492px;width:173.5px;height:24px;background:#e6e7e9;border:1px solid #b9c0ca;border-radius:4px"></div>
<div class="a" style="left:239px;top:493px;width:1px;height:22px;background:#c4cad3;"></div>
<div class="a" style="left:274px;top:493px;width:1px;height:22px;background:#c4cad3;"></div>
<div class="a" style="left:291px;top:493px;width:1px;height:22px;background:#c4cad3;"></div>
<div class="a" style="left:326px;top:493px;width:1px;height:22px;background:#c4cad3;"></div>
<div class="a" style="left:343.5px;top:493px;width:1.0px;height:22px;background:#c4cad3;"></div>
<div class="a" style="left:383.5px;top:492px;width:35.0px;height:24px;background:#e6e7e9;border:1px solid #b9c0ca;border-radius:4px"></div>
<div class="a" style="left:422.5px;top:492px;width:34.5px;height:24px;background:#e6e7e9;border:1px solid #b9c0ca;border-radius:4px"></div>
<div class="a" style="left:462.5px;top:492px;width:34.5px;height:24px;background:#e6e7e9;border:1px solid #b9c0ca;border-radius:4px"></div>
<div class="a" style="left:502.5px;top:492px;width:35.0px;height:24px;background:#e6e7e9;border:1px solid #b9c0ca;border-radius:4px"></div>
<svg class="a" style="left:210px;top:496px;" width="23" height="17" viewBox="0 0 23 17"><path d="M0.5 2h14M0.5 6.5h14M0.5 11h8M15.5 8.5v8M11.5 12.5h8" stroke="#555" stroke-width="1.8"/></svg>
<svg class="a" style="left:247px;top:494px;" width="19" height="20" viewBox="0 0 19 20"><path d="M3 1h6v2H4v13H2V2a1 1 0 0 1 1-1z" fill="#6e6e6e"/><path d="M6 4h7l5 5v10H6z" fill="#6e6e6e"/><path d="M13 4v5h5" fill="#9a9a9a"/></svg>
<svg class="a" style="left:277.5px;top:500px;" width="12" height="7.6" viewBox="0 0 12 7.6"><path d="M1 1.5L6.0 6.1L11 1.5" fill="none" stroke="#1e1e1e" stroke-width="1.7"/></svg>
<svg class="a" style="left:300.5px;top:493px;" width="18" height="20" viewBox="0 0 18 20"><rect x="1.2" y="3" width="15.6" height="16" rx="1.5" fill="none" stroke="#6e6e6e" stroke-width="1.8"/><rect x="5" y="1" width="8" height="4" rx="1" fill="#e6e7e9" stroke="#6e6e6e" stroke-width="1.6"/></svg>
<svg class="a" style="left:330.5px;top:500px;" width="12" height="7.6" viewBox="0 0 12 7.6"><path d="M1 1.5L6.0 6.1L11 1.5" fill="none" stroke="#1e1e1e" stroke-width="1.7"/></svg>
<svg class="a" style="left:355px;top:495px;" width="13" height="18" viewBox="0 0 13 18"><rect x="0" y="1.5" width="13" height="2" fill="#6e6e6e"/><rect x="4" y="0" width="5" height="2" fill="#6e6e6e"/><path d="M1.2 4.5h10.6l-1 12.5H2.2z" fill="#6e6e6e"/></svg>
<svg class="a" style="left:392px;top:494px;" width="20" height="20" viewBox="0 0 20 20"><ellipse cx="7.5" cy="3.5" rx="6.5" ry="2.8" fill="#6e6e6e"/><path d="M1 6c0 1.5 2.9 2.8 6.5 2.8S14 7.5 14 6v2.8c0 1.5-2.9 2.8-6.5 2.8S1 10.3 1 8.8z" fill="#6e6e6e"/><path d="M1 11.3c0 1.5 2.9 2.8 6.5 2.8v3c-3.6 0-6.5-1.3-6.5-2.8z" fill="#6e6e6e"/><circle cx="13.5" cy="13.5" r="5.5" fill="#6e6e6e" stroke="#e6e7e9" stroke-width="1.2"/><rect x="10.5" y="11" width="6" height="5" fill="#e6e7e9"/></svg>
<svg class="a" style="left:433.5px;top:496px;" width="14" height="15" viewBox="0 0 14 15"><path d="M7 0.5v9M2.5 5.5L7 10l4.5-4.5" fill="none" stroke="#1e1e1e" stroke-width="2.2"/><path d="M0.5 13.8h13" stroke="#1e1e1e" stroke-width="1.8"/></svg>
<svg class="a" style="left:470.5px;top:497.5px;" width="20" height="12" viewBox="0 0 20 12"><path d="M1 10.5l5.5-6 4.5 3.5L19 1.5" fill="none" stroke="#1e1e1e" stroke-width="2"/></svg>
<div class="t" style="left:506.5px;top:504.9px;font-size:18.1px;color:#1e1e1e;transform:scaleX(0.70);transform-origin:0 0">SQL</div>
<div class="t" style="left:600.35px;top:504.55px;font-size:18.1px;color:#1e1e1e;font-weight:normal;font-family:'Liberation Mono';">Showing rows: 1 to 7</div>
<div class="a" style="left:822px;top:493px;width:30px;height:21px;background:#ececec;border:1px solid #b9c0ca;border-radius:4px"></div>
<svg class="a" style="left:828.5px;top:496px;" width="16" height="16" viewBox="0 0 16 16"><path d="M1 15l1-4L11.5 1.5a1.6 1.6 0 0 1 2.3 0l.7.7a1.6 1.6 0 0 1 0 2.3L5 14z" fill="#1e1e1e"/></svg>
<div class="a" style="left:865px;top:492px;width:1px;height:24px;background:#c4cad3;"></div>
<div class="t" style="left:872.15px;top:504.55px;font-size:18.1px;color:#1e1e1e;font-weight:normal;font-family:'Liberation Mono';">Page No:</div>
<div class="a" style="left:963px;top:492px;width:105px;height:24px;background:#e8e8e8;border-radius:4px"></div>
<div class="t" style="left:973.25px;top:504.55px;font-size:18.1px;color:#1e1e1e;font-weight:normal;font-family:'Liberation Mono';">1</div>
<div class="t" style="left:1073.35px;top:504.55px;font-size:18.1px;color:#1e1e1e;font-weight:normal;font-family:'Liberation Mono';">of 1</div>
<div class="a" style="left:1129px;top:492px;width:1px;height:24px;background:#c4cad3;"></div>
<div class="a" style="left:1136.5px;top:492px;width:141.0px;height:24px;background:#e6e7e9;border:1px solid #b9c0ca;border-radius:4px"></div>
<div class="a" style="left:1170.5px;top:493px;width:1.0px;height:22px;background:#c4cad3;"></div>
<div class="a" style="left:1206px;top:493px;width:1px;height:22px;background:#c4cad3;"></div>
<div class="a" style="left:1241.5px;top:493px;width:1.0px;height:22px;background:#c4cad3;"></div>
<svg class="a" style="left:1147px;top:497px;" width="12" height="13" viewBox="0 0 12 13"><path d="M1 0.5v12" stroke="#555" stroke-width="1.6"/><path d="M11 0.5v12L3.5 6.5z" fill="#555"/></svg>
<svg class="a" style="left:1182px;top:497px;" width="15" height="13" viewBox="0 0 15 13"><path d="M7.5 0.5v12L0.5 6.5z" fill="#555"/><path d="M14.5 0.5v12L7.5 6.5z" fill="#555"/></svg>
<svg class="a" style="left:1218px;top:497px;" width="15" height="13" viewBox="0 0 15 13"><path d="M0.5 0.5v12l7-6z" fill="#555"/><path d="M7.5 0.5v12l7-6z" fill="#555"/></svg>
<svg class="a" style="left:1253px;top:497px;" width="12" height="13" viewBox="0 0 12 13"><path d="M11 0.5v12" stroke="#555" stroke-width="1.6"/><path d="M1 0.5v12l7.5-6z" fill="#555"/></svg>
<div class="a" style="left:202px;top:519px;width:1076px;height:169px;background:#e8e8e8;"></div>
<div class="a" style="left:202px;top:519px;width:657px;height:34.5px;background:#b2bac6;"></div>
<div class="a" style="left:202px;top:553.5px;width:39px;height:134.5px;background:#b2bac6;"></div>
<div class="a" style="left:241px;top:553.5px;width:618px;height:22.5px;background:#e8e8e8;"></div>
<div class="a" style="left:202px;top:575px;width:657px;height:1px;background:#c4c9d0;"></div>
<div class="a" style="left:241px;top:576px;width:618px;height:22.5px;background:#d7dae0;"></div>
<div class="a" style="left:202px;top:597.5px;width:657px;height:1.0px;background:#c4c9d0;"></div>
<div class="a" style="left:241px;top:598.5px;width:618px;height:22.5px;background:#e8e8e8;"></div>
<div class="a" style="left:202px;top:620px;width:657px;height:1px;background:#c4c9d0;"></div>
<div class="a" style="left:241px;top:621px;width:618px;height:23px;background:#d7dae0;"></div>
<div class="a" style="left:202px;top:643px;width:657px;height:1px;background:#c4c9d0;"></div>
<div class="a" style="left:241px;top:644px;width:618px;height:22.5px;background:#e8e8e8;"></div>
<div class="a" style="left:202px;top:665.5px;width:657px;height:1.0px;background:#c4c9d0;"></div>
<div class="a" style="left:241px;top:666.5px;width:618px;height:21.5px;background:#d7dae0;"></div>
<div class="a" style="left:202px;top:687px;width:657px;height:1px;background:#c4c9d0;"></div>
<div class="a" style="left:241px;top:519px;width:1px;height:169px;background:#cdd2d9;"></div>
<div class="a" style="left:509px;top:519px;width:1px;height:169px;background:#cdd2d9;"></div>
<div class="a" style="left:679px;top:519px;width:1px;height:169px;background:#cdd2d9;"></div>
<div class="a" style="left:859px;top:519px;width:1px;height:169px;background:#cdd2d9;"></div>
<div class="t" style="left:247.95px;top:531.05px;font-size:18.1px;color:#111;font-weight:normal;font-family:'Liberation Mono';-webkit-text-stroke:0.75px #111;">LAST_NAME</div>
<div class="t" style="left:247.95px;top:544.85px;font-size:18.1px;color:#1e1e1e;font-weight:normal;font-family:'Liberation Mono';">character varying (25)</div>
<div class="t" style="left:515.75px;top:531.05px;font-size:18.1px;color:#111;font-weight:normal;font-family:'Liberation Mono';-webkit-text-stroke:0.75px #111;">SALARY</div>
<div class="t" style="left:515.75px;top:544.85px;font-size:18.1px;color:#1e1e1e;font-weight:normal;font-family:'Liberation Mono';">numeric (8,2)</div>
<div class="t" style="left:685.05px;top:531.05px;font-size:18.1px;color:#111;font-weight:normal;font-family:'Liberation Mono';-webkit-text-stroke:0.75px #111;">COMMISSION_PCT</div>
<div class="t" style="left:685.05px;top:544.85px;font-size:18.1px;color:#1e1e1e;font-weight:normal;font-family:'Liberation Mono';">numeric (2,2)</div>
<svg class="a" style="left:493.5px;top:530px;" width="11" height="13" viewBox="0 0 11 13"><path d="M2.8 5.5V3.8a2.7 2.7 0 0 1 5.4 0v1.7" fill="none" stroke="#111" stroke-width="1.7"/><rect x="0.5" y="5.5" width="10" height="7.5" rx="1" fill="#111"/></svg>
<svg class="a" style="left:662.5px;top:530px;" width="11" height="13" viewBox="0 0 11 13"><path d="M2.8 5.5V3.8a2.7 2.7 0 0 1 5.4 0v1.7" fill="none" stroke="#111" stroke-width="1.7"/><rect x="0.5" y="5.5" width="10" height="7.5" rx="1" fill="#111"/></svg>
<svg class="a" style="left:842.5px;top:530px;" width="11" height="13" viewBox="0 0 11 13"><path d="M2.8 5.5V3.8a2.7 2.7 0 0 1 5.4 0v1.7" fill="none" stroke="#111" stroke-width="1.7"/><rect x="0.5" y="5.5" width="10" height="7.5" rx="1" fill="#111"/></svg>
<div class="t" style="left:209.05px;top:566.75px;font-size:18.1px;color:#1e1e1e;font-weight:normal;font-family:'Liberation Mono';">2</div>
<div class="t" style="left:249.85px;top:566.75px;font-size:18.1px;color:#1e1e1e;font-weight:normal;font-family:'Liberation Mono';">Hooper</div>
<div class="t" style="left:594.93px;top:566.75px;font-size:18.1px;color:#1e1e1e;font-weight:normal;font-family:'Liberation Mono';">9600.00</div>
<div class="t" style="left:809.01px;top:566.75px;font-size:18.1px;color:#1e1e1e;font-weight:normal;font-family:'Liberation Mono';">0.20</div>
<div class="t" style="left:209.05px;top:588.25px;font-size:18.1px;color:#1e1e1e;font-weight:normal;font-family:'Liberation Mono';">3</div>
<div class="t" style="left:249.85px;top:588.25px;font-size:18.1px;color:#1e1e1e;font-weight:normal;font-family:'Liberation Mono';">Barbosa Souza</div>
<div class="t" style="left:594.93px;top:588.25px;font-size:18.1px;color:#1e1e1e;font-weight:normal;font-family:'Liberation Mono';">9500.00</div>
<div class="t" style="left:809.01px;top:588.25px;font-size:18.1px;color:#1e1e1e;font-weight:normal;font-family:'Liberation Mono';">0.20</div>
<div class="t" style="left:209.05px;top:610.45px;font-size:18.1px;color:#1e1e1e;font-weight:normal;font-family:'Liberation Mono';">4</div>
<div class="t" style="left:249.85px;top:610.45px;font-size:18.1px;color:#1e1e1e;font-weight:normal;font-family:'Liberation Mono';">Silva Pinto</div>
<div class="t" style="left:594.93px;top:610.45px;font-size:18.1px;color:#1e1e1e;font-weight:normal;font-family:'Liberation Mono';">7500.00</div>
<div class="t" style="left:809.01px;top:610.45px;font-size:18.1px;color:#1e1e1e;font-weight:normal;font-family:'Liberation Mono';">0.15</div>
<div class="t" style="left:209.05px;top:633.25px;font-size:18.1px;color:#1e1e1e;font-weight:normal;font-family:'Liberation Mono';">5</div>
<div class="t" style="left:249.85px;top:633.25px;font-size:18.1px;color:#1e1e1e;font-weight:normal;font-family:'Liberation Mono';">Almeida Castro</div>
<div class="t" style="left:594.93px;top:633.25px;font-size:18.1px;color:#1e1e1e;font-weight:normal;font-family:'Liberation Mono';">7300.00</div>
<div class="t" style="left:809.01px;top:633.25px;font-size:18.1px;color:#1e1e1e;font-weight:normal;font-family:'Liberation Mono';">0.20</div>
<div class="t" style="left:209.05px;top:655.95px;font-size:18.1px;color:#1e1e1e;font-weight:normal;font-family:'Liberation Mono';">6</div>
<div class="t" style="left:249.85px;top:655.95px;font-size:18.1px;color:#1e1e1e;font-weight:normal;font-family:'Liberation Mono';">Alves Rocha</div>
<div class="t" style="left:594.93px;top:655.95px;font-size:18.1px;color:#1e1e1e;font-weight:normal;font-family:'Liberation Mono';">7300.00</div>
<div class="t" style="left:809.01px;top:655.95px;font-size:18.1px;color:#1e1e1e;font-weight:normal;font-family:'Liberation Mono';">0.15</div>
<div class="t" style="left:209.05px;top:678.35px;font-size:18.1px;color:#1e1e1e;font-weight:normal;font-family:'Liberation Mono';">7</div>
<div class="t" style="left:249.85px;top:678.35px;font-size:18.1px;color:#1e1e1e;font-weight:normal;font-family:'Liberation Mono';">Grant</div>
<div class="t" style="left:594.93px;top:678.35px;font-size:18.1px;color:#1e1e1e;font-weight:normal;font-family:'Liberation Mono';">7000.00</div>
<div class="t" style="left:809.01px;top:678.35px;font-size:18.1px;color:#1e1e1e;font-weight:normal;font-family:'Liberation Mono';">0.15</div>
<div class="a" style="left:202px;top:688px;width:1078px;height:31px;background:#d6d9de;"></div>
<div class="a" style="left:202px;top:688px;width:1078px;height:1px;background:#c4c9d0;"></div>
<div class="a" style="left:0px;top:719px;width:1280px;height:1px;background:#2a2a2a;"></div>
<div class="t" style="left:212.85px;top:704.85px;font-size:18.1px;color:#1e1e1e;font-weight:normal;font-family:'Liberation Mono';">Total rows: 7</div>
<div class="a" style="left:364.5px;top:692px;width:1.0px;height:24px;background:#c4c9d0;"></div>
<div class="t" style="left:376.55px;top:704.85px;font-size:18.1px;color:#1e1e1e;font-weight:normal;font-family:'Liberation Mono';">Query complete 00:00:00.509</div>
<div class="a" style="left:681px;top:692px;width:1px;height:24px;background:#c4c9d0;"></div>
<div class="t" style="left:1092.35px;top:704.85px;font-size:18.1px;color:#1e1e1e;font-weight:normal;font-family:'Liberation Mono';">LF</div>
<div class="a" style="left:1125.5px;top:692px;width:1.0px;height:24px;background:#c4c9d0;"></div>
<div class="t" style="left:1137.75px;top:704.85px;font-size:18.1px;color:#1e1e1e;font-weight:normal;font-family:'Liberation Mono';">Ln 5, Col 1</div>
<div class="a" style="left:1278px;top:195px;width:1px;height:524px;background:#c8ccd2;"></div>
<div class="a" style="left:1279px;top:195px;width:1px;height:525px;background:#9a9a9a;"></div>
</body></html>
